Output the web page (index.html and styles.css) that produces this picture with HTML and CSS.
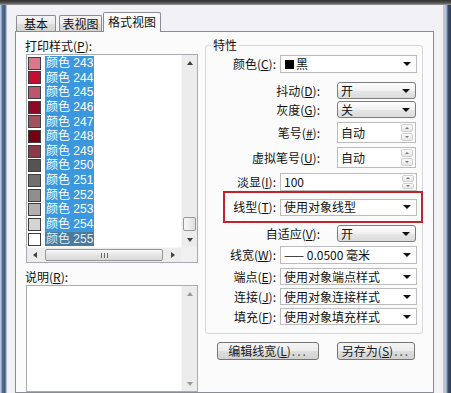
FILE: index.html
```html
<!DOCTYPE html>
<html>
<head>
<meta charset="utf-8">
<title>打印样式表编辑器</title>
<link rel="stylesheet" href="styles.css">
</head>
<body>
<div class="window">
  <div class="titlebar"></div>
  <div class="frame">
    <div class="edge-left"></div>
    <div class="dialog">
      <div class="tabs">
        <div class="tab tab-basic">基本</div>
        <div class="tab tab-table">表视图</div>
        <div class="tab tab-active">格式视图</div>
      </div>
      <div class="panel">
        <div class="col-left">
          <div class="caption">打印样式(<u>P</u>):</div>
          <div class="listbox">
            <div class="list-main">
              <ul class="items">
                <li class="item"><span class="swatch" style="background:#d8788a"></span><span class="name">颜色 243</span></li>
                <li class="item"><span class="swatch" style="background:#c20f32"></span><span class="name">颜色 244</span></li>
                <li class="item"><span class="swatch" style="background:#b9586d"></span><span class="name">颜色 245</span></li>
                <li class="item"><span class="swatch" style="background:#8e0a24"></span><span class="name">颜色 246</span></li>
                <li class="item"><span class="swatch" style="background:#a1505f"></span><span class="name">颜色 247</span></li>
                <li class="item"><span class="swatch" style="background:#760012"></span><span class="name">颜色 248</span></li>
                <li class="item"><span class="swatch" style="background:#8b3a49"></span><span class="name">颜色 249</span></li>
                <li class="item"><span class="swatch" style="background:#545454"></span><span class="name">颜色 250</span></li>
                <li class="item"><span class="swatch" style="background:#707070"></span><span class="name">颜色 251</span></li>
                <li class="item"><span class="swatch" style="background:#8f8f8f"></span><span class="name">颜色 252</span></li>
                <li class="item"><span class="swatch" style="background:#b1b1b1"></span><span class="name">颜色 253</span></li>
                <li class="item"><span class="swatch" style="background:#d4d4d4"></span><span class="name">颜色 254</span></li>
                <li class="item item-focus"><span class="swatch" style="background:#ffffff"></span><span class="name">颜色 255</span></li>
              </ul>
              <div class="vscroll">
                <div class="arrow-btn"><span class="tri-up"></span></div>
                <div class="track"><div class="thumb"></div></div>
                <div class="arrow-btn"><span class="tri-down"></span></div>
              </div>
            </div>
            <div class="hscroll-row">
              <div class="hscroll">
                <div class="harrow"><span class="tri-left"></span></div>
                <div class="htrack"><div class="hthumb"><span class="grip"></span></div></div>
                <div class="harrow"><span class="tri-right"></span></div>
              </div>
              <div class="corner"></div>
            </div>
          </div>
          <div class="caption caption-desc">说明(<u>R</u>):</div>
          <div class="descbox">
            <div class="desc-text"></div>
            <div class="vscroll vscroll-off">
              <div class="arrow-btn"><span class="tri-up"></span></div>
              <div class="track"></div>
              <div class="arrow-btn"><span class="tri-down"></span></div>
            </div>
          </div>
        </div>

        <div class="col-right">
          <fieldset class="group">
            <legend>特性</legend>

            <div class="field field-wide row-color">
              <span class="lbl">颜色(<u>C</u>):</span>
              <div class="combo combo-wide"><span class="val"><span class="chip"></span>黑</span><span class="caret"></span></div>
            </div>

            <div class="field field-narrow row-dither">
              <span class="lbl">抖动(<u>D</u>):</span>
              <div class="combo combo-narrow combo-btn"><span class="val">开</span><span class="caret"></span></div>
            </div>

            <div class="field field-narrow row-gray">
              <span class="lbl">灰度(<u>G</u>):</span>
              <div class="combo combo-narrow combo-btn"><span class="val">关</span><span class="caret"></span></div>
            </div>

            <div class="field field-narrow row-pen">
              <span class="lbl">笔号(<u>#</u>):</span>
              <div class="spin combo-narrow"><span class="val">自动</span><span class="spin-btns"><span class="spin-btn"><span class="mini-up"></span></span><span class="spin-btn"><span class="mini-down"></span></span></span></div>
            </div>

            <div class="field field-narrow row-vpen">
              <span class="lbl">虚拟笔号(<u>U</u>):</span>
              <div class="spin combo-narrow"><span class="val">自动</span><span class="spin-btns"><span class="spin-btn"><span class="mini-up"></span></span><span class="spin-btn"><span class="mini-down"></span></span></span></div>
            </div>

            <div class="field field-wide row-screen">
              <span class="lbl">淡显(<u>I</u>):</span>
              <div class="spin spin-short combo-wide"><span class="val">100</span><span class="spin-btns"><span class="spin-btn"><span class="mini-up"></span></span><span class="spin-btn"><span class="mini-down"></span></span></span></div>
            </div>

            <div class="field field-mark">
              <span class="lbl">线型(<u>T</u>):</span>
              <div class="combo combo-wide"><span class="val">使用对象线型</span><span class="caret"></span></div>
            </div>

            <div class="field field-narrow row-adapt">
              <span class="lbl">自适应(<u>V</u>):</span>
              <div class="combo combo-narrow combo-btn"><span class="val">开</span><span class="caret"></span></div>
            </div>

            <div class="field field-wide row-width">
              <span class="lbl">线宽(<u>W</u>):</span>
              <div class="combo combo-wide combo-tall"><span class="val">—— 0.0500 毫米</span><span class="caret"></span></div>
            </div>

            <div class="field field-wide row-end">
              <span class="lbl">端点(<u>E</u>):</span>
              <div class="combo combo-wide"><span class="val">使用对象端点样式</span><span class="caret"></span></div>
            </div>

            <div class="field field-wide row-join">
              <span class="lbl">连接(<u>J</u>):</span>
              <div class="combo combo-wide"><span class="val">使用对象连接样式</span><span class="caret"></span></div>
            </div>

            <div class="field field-wide row-fill">
              <span class="lbl">填充(<u>F</u>):</span>
              <div class="combo combo-wide"><span class="val">使用对象填充样式</span><span class="caret"></span></div>
            </div>
          </fieldset>

          <div class="buttons">
            <button class="btn btn-edit">编辑线宽(<u>L</u>)<span class="dots">...</span></button>
            <button class="btn btn-save">另存为(<u>S</u>)<span class="dots">...</span></button>
          </div>
        </div>
      </div>
    </div>
    <div class="edge-right"></div>
  </div>
</div>
</body>
</html>
```

FILE: styles.css
```css
* { box-sizing: border-box; }
html, body { margin: 0; padding: 0; }
body {
  width: 451px;
  height: 393px;
  overflow: hidden;
  font-family: "Noto Sans CJK SC", "Noto Sans", sans-serif;
  font-size: 12px;
  color: #111;
  background: #f2f1f6;
}
u { text-decoration: underline; text-underline-offset: 1px; }

.window { display: flex; flex-direction: column; height: 393px; }
.titlebar {
  height: 5px;
  flex: none;
  background: linear-gradient(#323232, #545454 60%, #9b9b9b);
}
.frame { flex: 1; display: flex; min-height: 0; }
.edge-left {
  width: 7px;
  flex: none;
  background: linear-gradient(to right, #b3c8e2 0, #b3c8e2 1px, #5d7192 2px, #46577a 5px, #8aa0bf 6px, #dcdfeb 7px);
}
.dialog {
  width: 436px;
  flex: none;
  padding-left: 8px;
  background: #f2f1f6;
  display: flex;
  flex-direction: column;
}
.edge-right {
  flex: 1;
  background: linear-gradient(to right, #c4c6cd 0, #c4c6cd 2px, #a9bfdc 3px, #7f98bb 4px, #3e4f6c 5px, #2f3d58 8px);
}

/* tabs */
.tabs {
  height: 27px;
  flex: none;
  display: flex;
  align-items: flex-end;
  padding-left: 1px;
}
.tab {
  height: 17px;
  border: 1px solid #898c95;
  border-bottom: none;
  border-radius: 2px 2px 0 0;
  background: linear-gradient(#f4f4f4, #ebebeb 50%, #dedede 51%, #d2d2d2);
  text-align: center;
  line-height: 15px;
  color: #111;
}
.tab-basic { width: 40px; margin-right: 3px; }
.tab-table { width: 43px; margin-right: 1px; }
.tab-active {
  position: relative;
  width: 58px;
  height: 20px;
  line-height: 17px;
  background: #fbfbfb;
}

.panel {
  width: 419px;
  flex: 1;
  margin-top: -1px;
  border: 1px solid #898c95;
  background: #fbfbfb;
  display: flex;
  padding: 7px 0 0 10px;
  min-height: 0;
}

/* left column */
.col-left { width: 172px; flex: none; }
.caption { height: 14px; line-height: 14px; margin-bottom: 1px; margin-left: -1px; }
.caption-desc { margin-top: 7px; }

.listbox {
  width: 172px;
  height: 209px;
  border: 1px solid #a9abb2;
  background: #fff;
  display: flex;
  flex-direction: column;
}
.list-main { height: 192px; display: flex; }
.items {
  flex: 1;
  list-style: none;
  margin: 0;
  padding: 1px 0 0 1px;
  overflow: hidden;
}
.item { height: 14.65px; display: flex; align-items: center; }
.swatch {
  width: 13px;
  height: 13px;
  flex: none;
  border: 1px solid #3d3d3d;
  margin-right: 4px;
}
.name {
  height: 100%;
  background: #3b98de;
  color: #fff;
  font-family: "Liberation Sans", "Noto Sans CJK SC", sans-serif;
  line-height: 14.65px;
  padding: 0 1px;
  white-space: nowrap;
}
.item-focus .name { background: #4a7b9c; color: #e4edf3; }

.vscroll {
  width: 16px;
  flex: none;
  display: flex;
  flex-direction: column;
  background: #ececec;
  border-left: 1px solid #f7f7f7;
}
.arrow-btn { height: 15px; flex: none; display: flex; align-items: center; justify-content: center; }
.track { flex: 1; display: flex; flex-direction: column; justify-content: flex-end; }
.thumb {
  height: 14px;
  margin: 0 1px 1px 1px;
  border: 1px solid #979797;
  border-radius: 2px;
  background: linear-gradient(to right, #f7f7f7, #e0e0e0);
}
.tri-up, .tri-down, .tri-left, .tri-right { width: 0; height: 0; }
.tri-up { border-left: 3px solid transparent; border-right: 3px solid transparent; border-bottom: 4px solid #404040; }
.tri-down { border-left: 3px solid transparent; border-right: 3px solid transparent; border-top: 4px solid #404040; }
.tri-left { border-top: 3px solid transparent; border-bottom: 3px solid transparent; border-right: 4px solid #404040; }
.tri-right { border-top: 3px solid transparent; border-bottom: 3px solid transparent; border-left: 4px solid #404040; }
.vscroll-off .tri-up { border-bottom-color: #9a9a9a; }
.vscroll-off .tri-down { border-top-color: #9a9a9a; }

.hscroll-row { height: 15px; flex: none; display: flex; }
.hscroll { width: 154px; flex: none; display: flex; background: #ececec; border-top: 1px solid #f7f7f7; }
.harrow { width: 16px; flex: none; display: flex; align-items: center; justify-content: center; }
.htrack { flex: 1; padding: 1px 2px; }
.hthumb {
  height: 100%;
  border: 1px solid #979797;
  border-radius: 2px;
  background: linear-gradient(#f8f8f8, #e6e6e6 50%, #d8d8d8);
  display: flex;
  align-items: center;
  justify-content: center;
}
.grip {
  width: 7px;
  height: 5px;
  background: repeating-linear-gradient(to right, #6a6a6a 0 1px, transparent 1px 3px);
}
.corner { flex: 1; background: #f0f0f0; }

.descbox {
  width: 172px;
  height: 107px;
  margin-top: 1px;
  border: 1px solid #a9abb2;
  background: #fff;
  display: flex;
}
.desc-text { flex: 1; }

/* right column */
.col-right { width: 218px; flex: none; margin-left: 7px; }
.group {
  margin: 0;
  padding: 0 0 8px 0;
  min-width: 0;
  width: 218px;
  border: 1px solid #d3d7dc;
  border-radius: 3px;
}
.group legend {
  margin-left: 5px;
  padding: 0 2px;
  line-height: 12px;
  font-size: 12px;
  color: #111;
}

.field { display: flex; align-items: center; }
.lbl { flex: none; text-align: right; white-space: nowrap; line-height: 14px; color: #111; }
.field-wide .lbl { width: 74px; padding-right: 4px; }
.field-narrow .lbl { width: 131px; padding-right: 17px; }
.field-mark .lbl { width: 55px; padding-right: 4px; }

.row-color { margin-top: 4px; }
.row-dither { margin-top: 9px; }
.row-gray { margin-top: 2px; }
.row-pen { margin-top: 4px; }
.row-vpen { margin-top: 4px; }
.row-screen { margin-top: 5px; }
.row-adapt { margin-top: 2px; }
.row-width { margin-top: 4px; }
.row-end { margin-top: 4px; }
.row-join { margin-top: 3px; }
.row-fill { margin-top: 3px; }

.field-mark {
  margin-left: 17px;
  margin-right: -1px;
  height: 32px;
  border: 2px solid #c1242b;
}

.combo {
  height: 17px;
  display: flex;
  align-items: center;
  border: 1px solid #bcbcbc;
  background: #fff;
  padding: 0 5px 0 3px;
  color: #111;
}
.combo-tall { height: 18px; }
.row-color .combo { height: 18px; }
.combo-wide { width: 137px; }
.combo-narrow { width: 79px; }
.combo .val { flex: 1; line-height: 14px; white-space: nowrap; display: flex; align-items: center; }
.combo-btn {
  border-color: #7d7d7d;
  border-radius: 3px;
  background: linear-gradient(#fdfdfd, #f0f0f0 50%, #e6e6e6 51%, #dcdcdc);
}
.caret {
  width: 0;
  height: 0;
  flex: none;
  border-left: 4px solid transparent;
  border-right: 4px solid transparent;
  border-top: 4px solid #111;
}
.chip { width: 9px; height: 9px; background: #000; margin: 0 2px 0 1px; display: inline-block; }

.spin {
  height: 21px;
  display: flex;
  border: 1px solid #bcbcbc;
  background: #fff;
}
.spin-short { height: 18px; }
.spin .val { flex: 1; align-self: center; padding-left: 3px; line-height: 14px; color: #111; }
.spin-btns { width: 12px; flex: none; margin: 1px 2px 1px 0; display: flex; flex-direction: column; gap: 1px; }
.spin-btn {
  flex: 1;
  border: 1px solid #cfcfcf;
  border-radius: 2px;
  background: linear-gradient(#fafafa, #e6e6e6);
  display: flex;
  align-items: center;
  justify-content: center;
}
.mini-up { width: 0; height: 0; border-left: 2px solid transparent; border-right: 2px solid transparent; border-bottom: 2px solid #777; }
.mini-down { width: 0; height: 0; border-left: 2px solid transparent; border-right: 2px solid transparent; border-top: 2px solid #777; }

.buttons { display: flex; margin-top: 8px; }
.btn {
  height: 18px;
  padding: 0;
  border: 1px solid #757575;
  border-radius: 3px;
  background: linear-gradient(#f4f4f4, #ececec 50%, #dedede 51%, #d2d2d2);
  font-family: "Noto Sans CJK SC", "Noto Sans", sans-serif;
  font-size: 12px;
  line-height: 16px;
  color: #1a1a1a;
  text-align: center;
}
.btn-edit { width: 102px; margin-left: 12px; }
.btn-save { width: 78px; margin-left: 18px; }
.dots { letter-spacing: 2px; color: #555; margin-left: 1px; }
```
